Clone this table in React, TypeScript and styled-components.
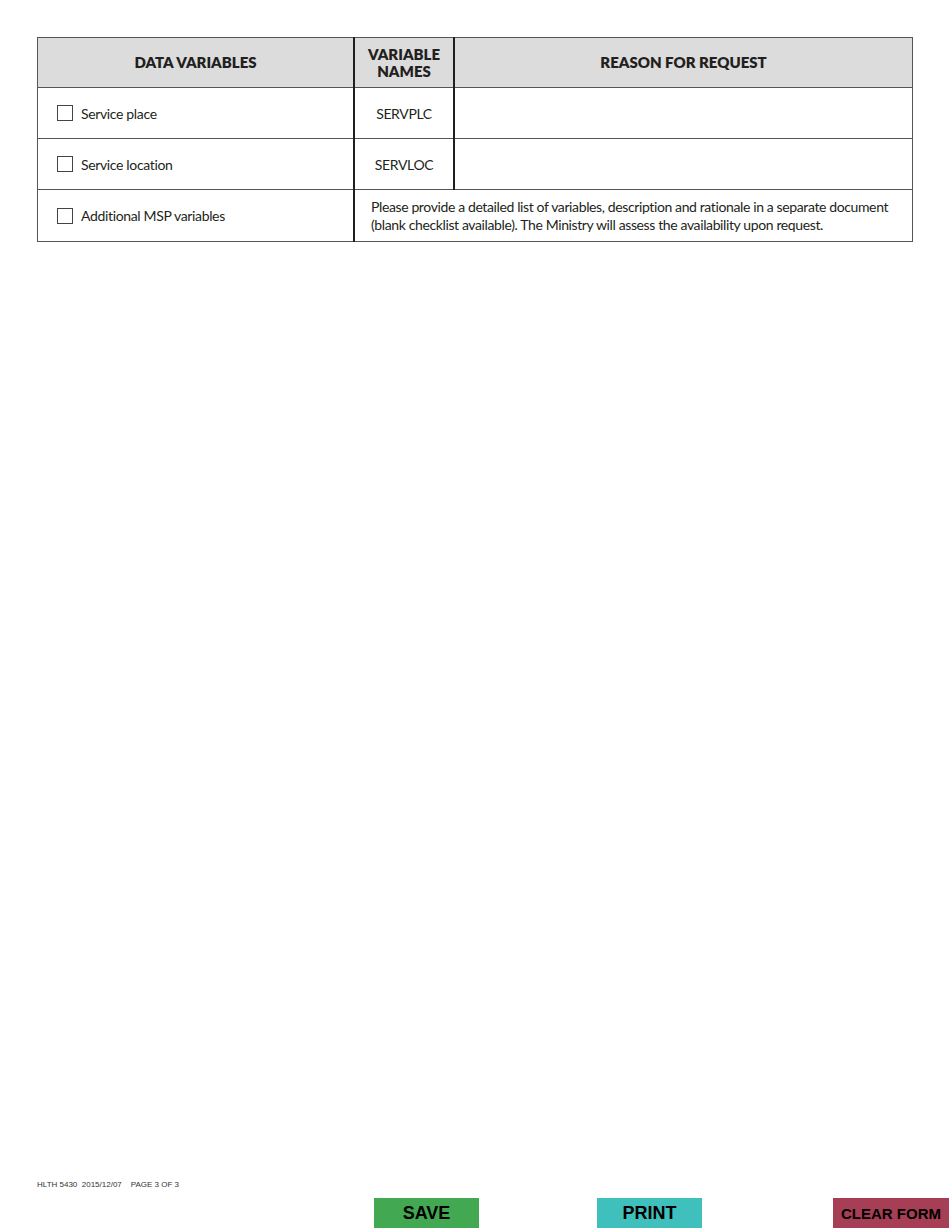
import React from "react";
import styled, { createGlobalStyle } from "styled-components";

const Global = createGlobalStyle`
  html, body { margin: 0; padding: 0; background: #fff; }
  body { font-family: Lato, "Open Sans", sans-serif; color: #231f20; }
`;

const Page = styled.div`
  width: 950px;
  height: 1230px;
  box-sizing: border-box;
  padding: 37px 0 2px 37px;
  display: flex;
  flex-direction: column;
`;

const Table = styled.table`
  width: 876px;
  border-collapse: collapse;
  table-layout: fixed;
  border: 1px solid #555;
`;

const HeadCell = styled.th<{ $w?: number; $thick?: boolean }>`
  width: ${(p) => (p.$w ? `${p.$w}px` : "auto")};
  height: 49px;
  background: #dcdcdc;
  font-family: Lato, sans-serif;
  font-weight: 800;
  font-size: 15px;
  line-height: 17px;
  color: #231f20;
  text-align: center;
  padding: 0;
  border-right: ${(p) => (p.$thick ? "2px solid #231f20" : "none")};
  border-bottom: 1px solid #555;
`;

const Row = styled.tr<{ $h: number }>`
  height: ${(p) => p.$h}px;
  border-bottom: 1px solid #555;
`;

const LabelCell = styled.td`
  padding: 0 0 0 19px;
  border-right: 2px solid #231f20;
  font-size: 14px;
  letter-spacing: -0.35px;
`;

const Label = styled.div`
  display: flex;
  align-items: center;
  gap: 8px;
`;

const Box = styled.span`
  width: 14px;
  height: 14px;
  border: 1px solid #444;
  flex: none;
  background: #fff;
`;

const NameCell = styled.td`
  text-align: center;
  font-size: 14px;
  letter-spacing: -0.35px;
  border-right: 2px solid #231f20;
  padding: 0;
`;

const EmptyCell = styled.td`
  padding: 0;
`;

const NoteCell = styled.td`
  padding: 0 0 0 16px;
  font-size: 14px;
  line-height: 18px;
  letter-spacing: -0.38px;
`;

const Spacer = styled.div`
  flex: 1;
`;

const FooterText = styled.div`
  font-family: "Liberation Sans", Arial, sans-serif;
  font-size: 8px;
  color: #333;
  white-space: pre;
  margin-bottom: 9px;
`;

const ButtonRow = styled.div`
  display: flex;
  padding-left: 337px;
`;

const Btn = styled.button<{ $bg: string; $w: number; $ml: number; $fs: number }>`
  width: ${(p) => p.$w}px;
  height: 30px;
  margin-left: ${(p) => p.$ml}px;
  background: ${(p) => p.$bg};
  border: none;
  padding: 0;
  font-family: "Liberation Sans", Arial, sans-serif;
  font-weight: 700;
  font-size: ${(p) => p.$fs}px;
  white-space: nowrap;
  color: #000;
  cursor: pointer;
`;

const rows = [
  { label: "Service place", name: "SERVPLC" },
  { label: "Service location", name: "SERVLOC" },
];

export default function App() {
  return (
    <>
      <Global />
      <Page>
        <Table>
          <thead>
            <tr>
              <HeadCell $w={315} $thick>DATA VARIABLES</HeadCell>
              <HeadCell $w={98} $thick>
                VARIABLE
                <br />
                NAMES
              </HeadCell>
              <HeadCell>REASON FOR REQUEST</HeadCell>
            </tr>
          </thead>
          <tbody>
            {rows.map((r) => (
              <Row $h={51} key={r.name}>
                <LabelCell>
                  <Label>
                    <Box />
                    {r.label}
                  </Label>
                </LabelCell>
                <NameCell>{r.name}</NameCell>
                <EmptyCell />
              </Row>
            ))}
            <Row $h={52}>
              <LabelCell>
                <Label>
                  <Box />
                  Additional MSP variables
                </Label>
              </LabelCell>
              <NoteCell colSpan={2}>
                Please provide a detailed list of variables, description and rationale in a separate document
                <br />
                (blank checklist available). The Ministry will assess the availability upon request.
              </NoteCell>
            </Row>
          </tbody>
        </Table>
        <Spacer />
        <FooterText>{"HLTH 5430  2015/12/07    PAGE 3 OF 3"}</FooterText>
        <ButtonRow>
          <Btn $bg="#42a852" $w={105} $ml={0} $fs={18}>SAVE</Btn>
          <Btn $bg="#3fc0bd" $w={105} $ml={118} $fs={18}>PRINT</Btn>
          <Btn $bg="#a63f55" $w={116} $ml={131} $fs={15}>CLEAR FORM</Btn>
        </ButtonRow>
      </Page>
    </>
  );
}
